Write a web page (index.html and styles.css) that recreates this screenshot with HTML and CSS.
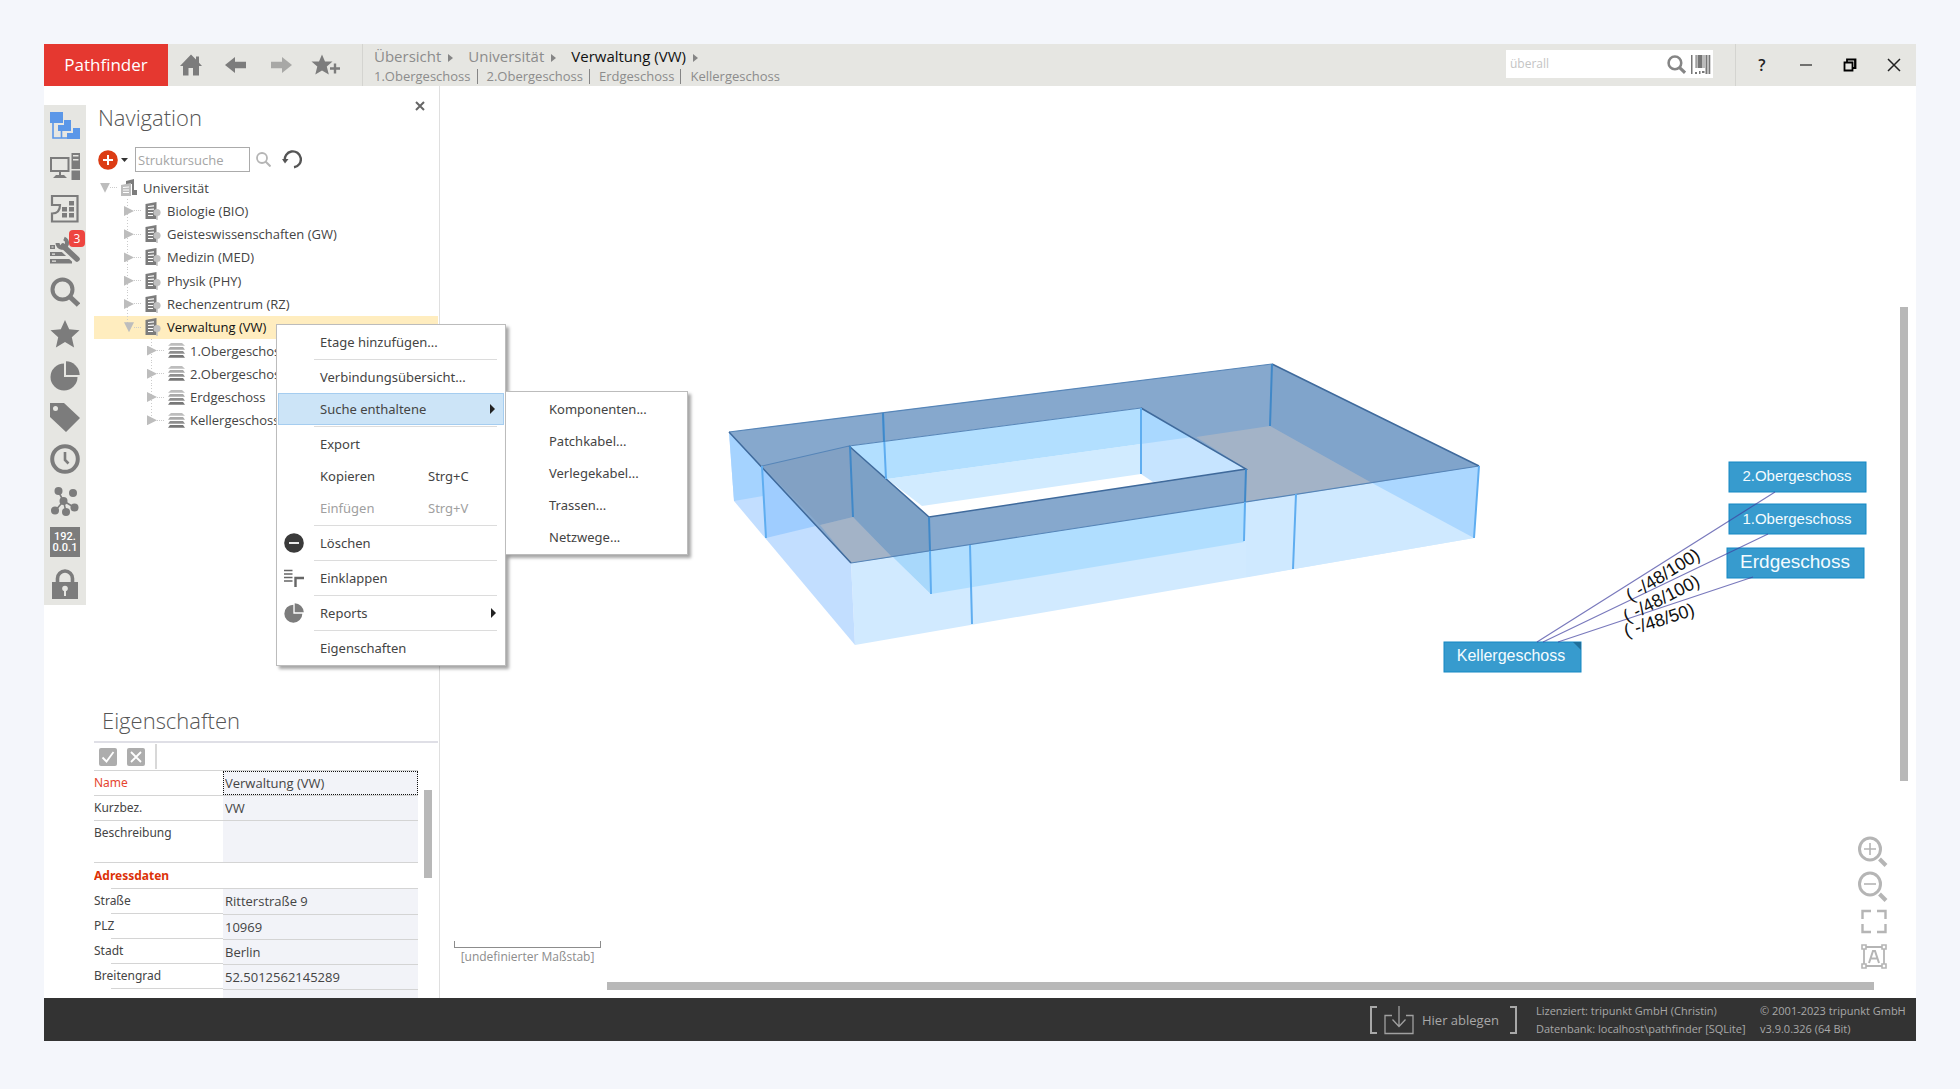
FILE: index.html
```html
<!DOCTYPE html>
<html lang="de">
<head>
<meta charset="utf-8">
<meta name="viewport" content="width=device-width, initial-scale=1">
<title>Pathfinder – Verwaltung (VW)</title>
<link rel="stylesheet" href="styles.css">
</head>
<body>
<svg class="defs" aria-hidden="true">
  <defs>
    <symbol id="i-building" viewBox="0 0 16 18">
      <path fill="#7c7c7c" d="M0 2 11 0v17H0z"/>
      <path stroke="#fff" stroke-width="1.2" d="M2.500 4.500l6-.6M2.500 7.500l6-.3M2.500 10.500h5M2.500 13.500h5"/>
      <circle cx="11.500" cy="10.500" r="3.600" fill="#c0c0c0"/><path stroke="#c0c0c0" stroke-width="1.500" d="M11.500 13v5"/>
    </symbol>
    <symbol id="i-floor" viewBox="0 0 17 15">
      <path fill="#bdbdbd" d="M3 0h11l3 2.800H0z"/><path fill="#a9a9a9" d="M2 4h13l2 2.800H0z"/><path fill="#8f8f8f" d="M2 8h13l2 2.800H0z"/><path fill="#777" d="M2 12h13l2 2.800H0z"/>
    </symbol>
    <symbol id="i-pie" viewBox="0 0 30 30">
      <path d="M14 2.500V16h13.500A13.500 13.500 0 1 1 14 2.500z"/><path d="M16 .3A14 14 0 0 1 29.700 14H16z"/>
    </symbol>
    <symbol id="i-search" viewBox="0 0 30 30">
      <circle cx="12.500" cy="12.500" r="10" fill="none" stroke="currentColor" stroke-width="4"/><path stroke="currentColor" stroke-width="5" d="M19.500 19.500l9 8.500"/>
    </symbol>
    <symbol id="i-star" viewBox="0 0 30 30">
      <path d="M15 1l4.200 9.300 10.300 1-7.700 6.900 2.300 10.200L15 23l-9.100 5.400 2.300-10.200L.5 11.300l10.300-1z"/>
    </symbol>
  </defs>
</svg>

<div class="app">
  <header class="topbar">
    <div class="brand">Pathfinder</div>
    <nav class="quick" aria-label="Schnellzugriff">
      <button type="button" aria-label="Startseite"><svg width="22" height="22" viewBox="0 0 22 22"><path d="M11 .5 0 12h3v9.500h5.500V14h4.500v7.500h6V12h3l-3-3.300V2.500h-3v3z"/></svg></button>
      <button type="button" aria-label="Zurück"><svg width="22" height="16" viewBox="0 0 22 16"><path d="M0 8 10 0v4.800h11v6.400H10V16z"/></svg></button>
      <button type="button" aria-label="Vorwärts" class="faded"><svg width="22" height="16" viewBox="0 0 22 16"><path d="M22 8 12 0v4.800H1v6.400h11V16z"/></svg></button>
      <button type="button" aria-label="Favorit hinzufügen"><svg width="30" height="22" viewBox="0 0 30 22"><path d="M11 .5l3 7h7.500l-5.700 5 2 8L11 16.500 4.300 20.500l2-8L.5 7.500H8z"/><path d="M19 14.500h10M24 9.500v10" stroke="#e6e6e2" stroke-width="5"/><path d="M19 14.500h10M24 9.500v10" stroke="#7c7c7c" stroke-width="2.400"/></svg></button>
    </nav>
    <nav class="crumbs" aria-label="Pfad">
      <div class="trail">
        <a href="#">Übersicht</a><i class="tri"></i>
        <a href="#">Universität</a><i class="tri"></i>
        <a href="#" class="current">Verwaltung (VW)</a><i class="tri"></i>
      </div>
      <div class="children"><a href="#">1.Obergeschoss</a><a href="#">2.Obergeschoss</a><a href="#">Erdgeschoss</a><a href="#">Kellergeschoss</a></div>
    </nav>
    <div class="search">
      <input type="search" placeholder="überall" aria-label="Überall suchen">
      <button type="button" aria-label="Suchen"><svg width="19" height="19"><use href="#i-search"/></svg></button>
      <button type="button" aria-label="Barcode"><svg width="20" height="19" viewBox="0 0 20 19"><path fill="#777" d="M0 0h1.500v19H0zM4.500 0h1.200v13H4.500zM6.500 0h5v13h-5zM12.500 0h1v13h-1zM14.500 0h2v19h-2zM17.500 0h1.800v19h-1.800zM4 17h2v2H4zM8 16h1.500v3H8zM11 16h2.500v2H11z"/></svg></button>
    </div>
    <div class="winctl">
      <button type="button" aria-label="Hilfe" class="help">?</button>
      <button type="button" aria-label="Minimieren"><svg width="14" height="14" viewBox="0 0 14 14"><path d="M1 7h12" stroke="#222" stroke-width="1.200"/></svg></button>
      <button type="button" aria-label="Wiederherstellen"><svg width="14" height="14" viewBox="0 0 14 14"><path d="M1.500 4.500h8v8h-8zM4 4V1.500h8.500V10H10M12 2v8" fill="none" stroke="#000" stroke-width="1.800"/></svg></button>
      <button type="button" aria-label="Schließen"><svg width="14" height="14" viewBox="0 0 14 14"><path d="M1 1l12 12M13 1L1 13" stroke="#222" stroke-width="1.500"/></svg></button>
    </div>
  </header>

  <main class="work">
    <nav class="rail" aria-label="Module">
      <button type="button" aria-label="Navigation" class="on"><svg viewBox="0 0 30 30"><path d="M0 1h13v11H0zM14 9h7v11H8v-6h6zM23 17h7v11H17v-6h6z"/><path d="M3 12v15h14M11.500 19v7.500" fill="none" stroke="#5b97e8" stroke-width="1.600"/></svg></button>
      <button type="button" aria-label="Geräte"><svg viewBox="0 0 30 30"><path fill-rule="evenodd" d="M0 5h19.500v15H11v3h3l3 3H3l3-3h3v-3H0zM2 7v11h15.500V7z"/><path fill-rule="evenodd" d="M21.500 1H30v16h-8.500zM23 3v1.600h5.500V3zm0 4v1.600h5.500V7zM21.500 18.500H30v9.500h-8.500z"/></svg></button>
      <button type="button" aria-label="Grundriss"><svg viewBox="0 0 30 30"><path d="M2 11V2h25.500v25.500H2v-8c5 0 8-3 8-8.500z" fill="none" stroke="#7c7c7c" stroke-width="2.200"/><path d="M12 13h5v4.500h-5zM12 19h5v4.500h-5zM19 7h5v4.500h-5zM19 13h5v4.500h-5zM19 19h5v4.500h-5z"/></svg></button>
      <button type="button" aria-label="Aufträge"><svg viewBox="0 0 30 30"><path d="M0 9h5v4H0zM0 16h15l4 4H0zM0 23h22v4.500H0z"/><path fill="#e6e6e2" d="M2 17.500h3v1.200H2zM2 24.600h4v1.200H2zM1.500 10.500h2v1h-2z"/><path d="M13 12l15 14" stroke="#e6e6e2" stroke-width="7.500"/><path d="M13 10l14 13" stroke="#7c7c7c" stroke-width="5.500" stroke-linecap="round"/><path d="M7.500 7a4.800 4.800 0 1 0 6.500-4.500" fill="none" stroke="#7c7c7c" stroke-width="4"/></svg><span class="badge">3</span></button>
      <button type="button" aria-label="Suche"><svg><use href="#i-search"/></svg></button>
      <button type="button" aria-label="Favoriten"><svg><use href="#i-star"/></svg></button>
      <button type="button" aria-label="Reports"><svg><use href="#i-pie"/></svg></button>
      <button type="button" aria-label="Etiketten"><svg viewBox="0 0 30 30"><path fill-rule="evenodd" d="M0 1h14l16 15-14 14L0 15zM5.500 4a2.500 2.500 0 1 0 0 5 2.500 2.500 0 0 0 0-5z"/></svg></button>
      <button type="button" aria-label="Verlauf"><svg viewBox="0 0 30 30"><circle cx="15" cy="15" r="12.800" fill="none" stroke="#7c7c7c" stroke-width="4"/><path d="M15 8v8l3.500 3.500" fill="none" stroke="#7c7c7c" stroke-width="2.600"/></svg></button>
      <button type="button" aria-label="Netz"><svg viewBox="0 0 30 30"><path d="M8 5l5.500 10L5 25M13.500 15l11 6.500M13.500 15L16 26" fill="none" stroke="#7c7c7c" stroke-width="1.600"/><circle cx="8.500" cy="5" r="4"/><circle cx="23" cy="7" r="4"/><circle cx="13.500" cy="15" r="4"/><circle cx="5" cy="24.500" r="4"/><circle cx="24.500" cy="21.500" r="4"/><circle cx="16" cy="26" r="4"/></svg></button>
      <button type="button" aria-label="IP-Adressen"><span class="ip">192.<br>0.0.1</span></button>
      <button type="button" aria-label="Rechte"><svg viewBox="0 0 30 30"><path d="M7.500 14V9.500a7.500 7.500 0 0 1 15 0V14" fill="none" stroke="#7c7c7c" stroke-width="3.600"/><path d="M2 13h26v17H2z"/><circle cx="15" cy="19.500" r="2.800" fill="#e6e6e2"/><path d="M14 20h2v7h-2z" fill="#e6e6e2"/></svg></button>
    </nav>

    <aside class="side">
      <section class="navpane">
        <div class="titlebar"><h2>Navigation</h2><button type="button" aria-label="Schließen"><svg width="10" height="10" viewBox="0 0 10 10"><path d="M1 1l8 8M9 1L1 9" stroke="#666" stroke-width="2"/></svg></button></div>
        <div class="tools">
          <button type="button" aria-label="Neu"><svg width="20" height="20" viewBox="0 0 20 20"><circle cx="10" cy="10" r="9.800" fill="#dc3c14"/><path d="M5 10h10M10 5v10" stroke="#fff" stroke-width="2"/></svg></button>
          <button type="button" aria-label="Neu Menü" class="caret"><svg width="7" height="4" viewBox="0 0 7 4"><path fill="#333" d="M0 0h7L3.500 4z"/></svg></button>
          <input type="search" placeholder="Struktursuche" aria-label="Struktursuche">
          <button type="button" aria-label="Struktur durchsuchen" class="find"><svg width="15" height="15" viewBox="0 0 15 15"><circle cx="6" cy="6" r="5" fill="none" stroke="#b5b5b5" stroke-width="1.800"/><path d="M9.500 9.500l5 5" stroke="#b5b5b5" stroke-width="2"/></svg></button>
          <button type="button" aria-label="Aktualisieren"><svg width="20" height="19" viewBox="0 0 20 19"><path d="M3 11A8 8 0 1 1 12 17.300" fill="none" stroke="#555" stroke-width="2.400"/><path d="M0 9h6.500L3 13.500z" fill="#555"/></svg></button>
        </div>
        <ul class="tree">
          <li class="l0 open"><i class="arrow"></i><i class="dots"></i><svg width="17" height="18" viewBox="0 0 17 18"><path fill="#7c7c7c" d="M5 2l8-2v11h3v5h-5V5H5z"/><path fill="#bdbdbd" d="M0 6l10-2v13H0z"/><path d="M2 8.500l6-.5M2 11h6M2 13.500h6" stroke="#fff"/></svg><span>Universität</span></li>
          <li class="l1"><i class="arrow"></i><i class="dots"></i><svg width="17" height="18"><use href="#i-building"/></svg><span>Biologie (BIO)</span></li>
          <li class="l1"><i class="arrow"></i><i class="dots"></i><svg width="17" height="18"><use href="#i-building"/></svg><span>Geisteswissenschaften (GW)</span></li>
          <li class="l1"><i class="arrow"></i><i class="dots"></i><svg width="17" height="18"><use href="#i-building"/></svg><span>Medizin (MED)</span></li>
          <li class="l1"><i class="arrow"></i><i class="dots"></i><svg width="17" height="18"><use href="#i-building"/></svg><span>Physik (PHY)</span></li>
          <li class="l1"><i class="arrow"></i><i class="dots"></i><svg width="17" height="18"><use href="#i-building"/></svg><span>Rechenzentrum (RZ)</span></li>
          <li class="l1 open last selected"><i class="arrow"></i><i class="dots"></i><svg width="17" height="18"><use href="#i-building"/></svg><span>Verwaltung (VW)</span></li>
          <li class="l2"><i class="arrow"></i><i class="dots"></i><svg width="17" height="15"><use href="#i-floor"/></svg><span>1.Obergeschoss</span></li>
          <li class="l2"><i class="arrow"></i><i class="dots"></i><svg width="17" height="15"><use href="#i-floor"/></svg><span>2.Obergeschoss</span></li>
          <li class="l2"><i class="arrow"></i><i class="dots"></i><svg width="17" height="15"><use href="#i-floor"/></svg><span>Erdgeschoss</span></li>
          <li class="l2 last"><i class="arrow"></i><i class="dots"></i><svg width="17" height="15"><use href="#i-floor"/></svg><span>Kellergeschoss</span></li>
        </ul>
      </section>

      <section class="props">
        <h2>Eigenschaften</h2>
        <div class="propbar">
          <button type="button" aria-label="Übernehmen"><svg width="18" height="18" viewBox="0 0 18 18"><path d="M3.500 9.500l4 4 7-9.500" fill="none" stroke="#fff" stroke-width="1.800"/></svg></button>
          <button type="button" aria-label="Verwerfen"><svg width="18" height="18" viewBox="0 0 18 18"><path d="M4 4l10 10M14 4L4 14" stroke="#fff" stroke-width="1.800"/></svg></button>
        </div>
        <div class="propbody">
          <table>
            <tr class="req"><th><label for="p1">Name</label></th><td><input id="p1" class="focus" value="Verwaltung (VW)"></td></tr>
            <tr><th><label for="p2">Kurzbez.</label></th><td><input id="p2" value="VW"></td></tr>
            <tr class="tall"><th><label for="p3">Beschreibung</label></th><td><textarea id="p3"></textarea></td></tr>
            <tr class="group"><th colspan="2">Adressdaten</th></tr>
            <tr class="sub"><th><label for="p4">Straße</label></th><td><input id="p4" value="Ritterstraße 9"></td></tr>
            <tr class="sub"><th><label for="p5">PLZ</label></th><td><input id="p5" value="10969"></td></tr>
            <tr class="sub"><th><label for="p6">Stadt</label></th><td><input id="p6" value="Berlin"></td></tr>
            <tr class="sub"><th><label for="p7">Breitengrad</label></th><td><input id="p7" value="52.5012562145289"></td></tr>
            <tr class="cut"><th></th><td></td></tr>
          </table>
          <div class="thumb"></div>
        </div>
      </section>
    </aside>

    <section class="canvas" aria-label="Gebäudeansicht">
      <svg class="scene" viewBox="440 86 1476 912">
        <g class="walls">
          <path fill="#d1eaff" d="M851 563 1479 466 1474 538 855 645z"/>
          <path fill="#cfe9ff" d="M1246 502 1479 466 1474 538 1246 577z"/>
          <path fill="#c2deff" d="M729 432 851 563 855 645 734 501z"/>
          <path fill="#a5d3ff" d="M729 432 762 466 763 496 734 501z"/>
          <path fill="#9fcdff" d="M762 466 820 525 766 538z"/>
          <path fill="#b0deff" d="M892 556 1246 502 1244 542 931 594z"/>
          <path fill="#a8d8fb" d="M892 556 930 551 931 594z"/>
          <path fill="#abd7ff" d="M1372 483 1479 466 1474 538z"/>
        </g>
        <path fill="#86a8cd" d="M729 432 1272 364 1479 466 851 563z"/>
        <path fill="#82a1c4" d="M762 466 849 446 853 517 820 525z"/>
        <path fill="#7da1c6" d="M849 446 929 517 930 551 892 557 853 517z"/>
        <path fill="#80a4cb" d="M1272 364 1479 466 1372 483 1270 426z"/>
        <path fill="#a3b3c7" d="M820 525 853 517 892 557 851 563z"/>
        <path fill="#a3b3c7" d="M1270 426 1196 437 1246 469 1246 502 1372 483z"/>
        <path fill="#fff" d="M849 446 1141 408 1246 469 929 517z"/>
        <path fill="#d1ebff" d="M887 479 1141 444 1141 474 922 506z"/>
        <path fill="#b2dfff" d="M849 446 1141 408 1141 444 887 479z"/>
        <path fill="#c6e4ff" d="M1141 408 1246 469 1153 482 1141 474z"/>
        <path fill="#a9d8ff" d="M1141 408 1192 437 1141 444z"/>
        <g fill="none" stroke="#5685b8" stroke-width="1.200">
          <path d="M729 432 1272 364M762 466 849 446 1141 408M851 563 1479 466"/>
          <path d="M729 432 851 563M849 446 929 517 1246 469 1141 408M1272 364 1479 466" stroke="#3f6a9c" stroke-width="1.500"/>
        </g>
        <g fill="none" stroke="#5fadf0" stroke-width="2">
          <path d="M762 466 766 538M970 545 972 624M1296 494 1293 569M1479 466 1474 538M1141 408 1141 474M883 413 886 479M930 551 931 594M1245 502 1244 541"/>
          <path stroke="#4088c8" d="M883 413 884 442M850 446 853 517M929 517 930 551M1246 469 1245 502M1272 364 1270 426"/>
        </g>
        <g class="nodes">
          <rect x="1729" y="462" width="137" height="30"/><text class="n15" x="1797" y="481">2.Obergeschoss</text>
          <rect x="1729" y="504" width="137" height="30"/><text class="n15" x="1797" y="524">1.Obergeschoss</text>
          <rect x="1727" y="548" width="137" height="30"/><text class="n19" x="1795" y="568">Erdgeschoss</text>
          <rect x="1444" y="642" width="137" height="30"/><path fill="#1f6f9b" d="M1573 642h8v8z"/><text class="n16" x="1511" y="661">Kellergeschoss</text>
        </g>
        <path fill="none" stroke="#4040a0" stroke-opacity=".7" stroke-width="1.200" d="M1537 642 1775 492M1543 642 1768 534M1558 642 1753 577"/>
        <g class="links">
          <text transform="translate(1666 580) rotate(-32)">( -/48/100)</text>
          <text transform="translate(1664 604) rotate(-27)">( -/48/100)</text>
          <text transform="translate(1661 626) rotate(-18)">( -/48/50)</text>
        </g>
      </svg>
      <div class="scale"><div class="ruler"></div>[undefinierter Maßstab]</div>
      <div class="zoomtools">
        <button type="button" aria-label="Vergrößern"><svg width="30" height="34" viewBox="0 0 30 34"><ellipse cx="12" cy="13" rx="10.500" ry="11" fill="none" stroke="#b5b5b5" stroke-width="3"/><path d="M6 13h12M12 7v12" stroke="#b5b5b5" stroke-width="1.600"/><path d="M21.500 23l6.500 6.500" stroke="#b5b5b5" stroke-width="4"/></svg></button>
        <button type="button" aria-label="Verkleinern"><svg width="30" height="34" viewBox="0 0 30 34"><ellipse cx="12" cy="13" rx="10.500" ry="11" fill="none" stroke="#b5b5b5" stroke-width="3"/><path d="M6 13h12" stroke="#b5b5b5" stroke-width="1.600"/><path d="M21.500 23l6.500 6.500" stroke="#b5b5b5" stroke-width="4"/></svg></button>
        <button type="button" aria-label="Einpassen"><svg width="30" height="34" viewBox="0 0 30 34"><path d="M4.500 13V5h8.500M19 5h8.500v8M27.500 18v8H19M13 26H4.500v-8" fill="none" stroke="#b5b5b5" stroke-width="2.400"/></svg></button>
        <button type="button" aria-label="Beschriftung"><svg width="30" height="34" viewBox="0 0 30 34"><path d="M6 6h20v19H6z" fill="none" stroke="#b5b5b5" stroke-width="1.800"/><g fill="#fff" stroke="#b5b5b5" stroke-width="1.600"><path d="M4 4h4v4H4zM24 4h4v4h-4zM4 23h4v4H4zM24 23h4v4h-4z"/></g><path d="M11 22l4-12h2l4 12M12.500 17.500h7" fill="none" stroke="#b5b5b5" stroke-width="2"/></svg></button>
      </div>
      <div class="vbar"></div>
      <div class="hbar"></div>
    </section>

    <div class="menu main-menu" role="menu">
      <button type="button" role="menuitem"><span>Etage hinzufügen...</span></button>
      <hr>
      <button type="button" role="menuitem"><span>Verbindungsübersicht...</span></button>
      <button type="button" role="menuitem" class="hot"><span>Suche enthaltene</span><i class="more"></i></button>
      <hr>
      <button type="button" role="menuitem"><span>Export</span></button>
      <button type="button" role="menuitem"><span>Kopieren</span><kbd>Strg+C</kbd></button>
      <button type="button" role="menuitem" disabled><span>Einfügen</span><kbd>Strg+V</kbd></button>
      <hr>
      <button type="button" role="menuitem"><svg width="20" height="20" viewBox="0 0 20 20"><circle cx="10" cy="10" r="9.800" fill="#3a3a3a"/><path d="M5 10h10" stroke="#fff" stroke-width="1.800"/></svg><span>Löschen</span></button>
      <hr>
      <button type="button" role="menuitem"><svg width="20" height="20" viewBox="0 0 20 20"><path d="M0 2.500h8.500M0 6h8.500M0 9.500h8.500M0 13h8.500" stroke="#666" stroke-width="1.300"/><path d="M11.500 19v-9h8.500" fill="none" stroke="#666" stroke-width="2.400"/></svg><span>Einklappen</span></button>
      <hr>
      <button type="button" role="menuitem"><svg width="20" height="20" fill="#7c7c7c"><use href="#i-pie"/></svg><span>Reports</span><i class="more"></i></button>
      <hr>
      <button type="button" role="menuitem"><span>Eigenschaften</span></button>
    </div>
    <div class="menu sub-menu" role="menu">
      <button type="button" role="menuitem"><span>Komponenten...</span></button>
      <button type="button" role="menuitem"><span>Patchkabel...</span></button>
      <button type="button" role="menuitem"><span>Verlegekabel...</span></button>
      <button type="button" role="menuitem"><span>Trassen...</span></button>
      <button type="button" role="menuitem"><span>Netzwege...</span></button>
    </div>
  </main>

  <footer class="status">
    <div class="drop"><svg width="30" height="30" viewBox="0 0 30 30"><path d="M8 10.500H1v18h28v-18h-7M15 1v20M8.500 14.500l6.500 7 6.500-7" fill="none" stroke="#a0a0a0" stroke-width="1.300"/></svg><span>Hier ablegen</span></div>
    <div class="info license"><span>Lizenziert: tripunkt GmbH (Christin)</span><span>Datenbank: localhost\pathfinder [SQLite]</span></div>
    <div class="info version"><span>© 2001-2023 tripunkt GmbH</span><span>v3.9.0.326 (64 Bit)</span></div>
  </footer>
</div>
</body>
</html>
```
FILE: styles.css
```css
* { box-sizing: border-box; }
body {
  margin: 0;
  padding: 44px 44px 48px;
  background: #f4f6fb;
  color: #444;
  font: 13px/18px "Open Sans", "Noto Sans", sans-serif;
}
button { padding: 0; border: 0; background: none; color: inherit; font: inherit; display: flex; align-items: center; justify-content: center; }
input, textarea { font: inherit; color: inherit; border: 0; padding: 0; margin: 0; min-width: 0; border-radius: 0; outline: 0; }
a { color: inherit; text-decoration: none; }
h2 { margin: 0; font-size: 22px; line-height: 28px; font-weight: 300; color: #555; }
svg { flex: none; }
.defs { position: absolute; width: 0; height: 0; }

.app { display: flex; flex-direction: column; min-height: calc(100vh - 92px); background: #fff; }

/* top bar */
.topbar { display: flex; height: 42px; background: #e6e6e2; }
.brand { width: 124px; background: #e53830; color: #fff; font-size: 17px; line-height: 42px; text-align: center; }
.quick { display: flex; padding-right: 14px; border-right: 1px solid #d4d4d0; fill: #7c7c7c; }
.quick button { width: 45px; }
.quick .faded { fill: #a8a8a6; }
.crumbs { display: flex; flex-direction: column; padding: 3px 0 0 11px; color: #8c8c8c; flex: 1; }
.trail { display: flex; align-items: center; font-size: 15px; line-height: 19px; }
.trail .current { color: #111; }
.tri { border: 4px solid transparent; border-left: 5px solid #858585; border-right: 0; margin: 2px 15px 0 7px; }
.children { display: flex; align-items: center; line-height: 15px; margin-top: 3px; }
.children a + a { border-left: 1px solid #858585; margin-left: 6px; padding-left: 9px; }
.search { display: flex; align-items: center; gap: 5px; width: 207px; height: 28px; margin: 6px 22px 0 0; padding: 0 2px 0 4px; background: #fff; color: #858585; }
.search input { flex: 1; font-size: 12px; background: none; }
.search input::placeholder { color: #c4c4c4; }
.winctl { display: flex; border-left: 1px solid #d4d4d0; padding-left: 4px; color: #222; }
.winctl button { width: 44px; }
.help { font-size: 16px; font-weight: 600; }

/* work area */
.work { display: flex; flex: 1; position: relative; }
.rail { display: grid; grid-auto-rows: 1fr; width: 42px; height: 500px; margin-top: 19px; background: #e6e6e2; fill: #7c7c7c; color: #7c7c7c; }
.rail button { position: relative; }
.rail svg { width: 30px; height: 30px; }
.rail .on { fill: #5b97e8; }
.badge { position: absolute; right: 1px; top: 0; width: 16px; height: 17px; border-radius: 4px; background: #ee4540; color: #fff; font-size: 12px; line-height: 17px; }
.ip { width: 30px; height: 30px; padding-top: 4px; background: #7c7c7c; color: #fff; font: 500 11px/11px Roboto, "Liberation Sans", sans-serif; }

.side { display: flex; flex-direction: column; width: 354px; padding-left: 8px; border-right: 1px solid #dfdfdf; }
.titlebar { display: flex; justify-content: space-between; align-items: flex-start; padding: 17px 14px 0 4px; height: 61px; }
.titlebar button { margin-top: -2px; }
.tools { display: flex; align-items: center; height: 25px; padding-left: 4px; }
.tools .caret { margin: 0 7px 0 3px; }
.tools input { width: 115px; height: 25px; border: 1px solid #ababab; padding: 0 2px; }
.tools input::placeholder { color: #a5a5a5; }
.tools .find { margin: 0 11px 0 6px; }

.tree { display: grid; grid-auto-rows: 1fr; height: 256px; margin: 4px 1px 0 0; padding: 0; list-style: none; color: #444; }
.tree li { display: flex; align-items: center; white-space: nowrap; background-image: repeating-linear-gradient(#ccc 0 1px, transparent 1px 3px); background-size: 1px 100%; background-repeat: no-repeat; background-position: -9px 0; }
.tree .l0 { padding-left: 6px; }
.tree .l1 { padding-left: 30px; background-position: 33px 0; }
.tree .l2 { padding-left: 53px; background-position: 57px 0; }
.tree .last { background-size: 1px 50%; }
.tree .selected { background-color: #ffedbf; color: #111; }
.arrow { width: 10px; height: 10px; background: #bdbdbd; clip-path: polygon(0 0, 100% 50%, 0 100%); }
.open .arrow { clip-path: polygon(0 0, 100% 0, 50% 100%); }
.dots { width: 7px; height: 1px; margin-right: 4px; background: repeating-linear-gradient(90deg, #ccc 0 1px, transparent 1px 2px); }
.tree span { margin-left: 5px; }

/* properties */
.props { margin-top: auto; }
.props h2 { padding: 0 8px; height: 35px; }
.propbar { display: flex; align-items: center; gap: 10px; height: 29px; padding-left: 5px; border-top: 2px solid #dfdfe6; margin-right: 1px; }
.propbar button { width: 18px; height: 18px; border-radius: 2px; background: #adadad; }
.propbar::after { content: ""; width: 2px; height: 25px; background: #d8d8d8; }
.propbody { display: flex; height: 228px; overflow: hidden; }
table { width: 324px; border-collapse: collapse; table-layout: fixed; border-top: 1px solid #d4d4d4; }
tr { height: 25px; }
th { width: 129px; padding: 0; text-align: left; vertical-align: top; font: 12px/23px "Noto Sans", "Open Sans", sans-serif; border-bottom: 1px solid #d4d4d4; }
td { padding: 0; background: #f2f3f8; border-bottom: 1px solid #d4d4d4; vertical-align: top; }
td input, td textarea { display: block; width: 100%; height: 24px; padding: 0 2px; background: none; resize: none; }
td textarea { height: 41px; }
.focus { border: 1px dotted #111; padding: 0 1px; }
.req th { color: #e5452f; }
.group th { width: auto; font-weight: 700; color: #dc3208; line-height: 26px; }
.sub th, .group th { border-bottom: 0; background: linear-gradient(#d4d4d4, #d4d4d4) 17px 100% / 100% 1px no-repeat; }
.thumb { width: 8px; height: 88px; margin: 20px 0 0 6px; background: #b8b8b8; }

/* canvas */
.canvas { position: relative; flex: 1; min-width: 0; }
.scene { position: absolute; inset: 0; width: 100%; height: 100%; }
.nodes rect { fill: #379bce; stroke: #1488c4; }
.nodes text { fill: #f4fbff; text-anchor: middle; font-family: "Liberation Sans", sans-serif; }
.nodes .n15 { font-size: 15px; }
.nodes .n16 { font-size: 16px; }
.nodes .n19 { font-size: 19px; }
.links text { fill: #111; text-anchor: middle; font: 18px "Liberation Sans", sans-serif; }
.scale { position: absolute; left: 14px; bottom: 32px; width: 147px; text-align: center; font-size: 12px; color: #8c8c8c; }
.ruler { height: 7px; border: solid #8c8c8c; border-width: 0 1px 1px; }
.zoomtools { position: absolute; right: 28px; bottom: 23px; display: flex; flex-direction: column; gap: 1px; }
.vbar { position: absolute; right: 8px; top: 221px; bottom: 217px; width: 8px; background: #b8b8b8; }
.hbar { position: absolute; left: 167px; right: 42px; bottom: 8px; height: 8px; background: #b8b8b8; }

/* context menus */
.menu { position: absolute; padding: 1px; background: #fff; border: 1px solid #bcbcbc; box-shadow: 3px 3px 3px rgba(0, 0, 0, .35); color: #444; font-family: "Noto Sans", "Open Sans", sans-serif; }
.menu button { position: relative; justify-content: flex-start; width: 100%; height: 32px; padding: 0 0 1px 42px; }
.menu button svg { position: absolute; left: 6px; }
.menu hr { height: 1px; margin: 1px 7px 1px 36px; border: 0; background: #dcdcdc; }
.menu .hot { border: 1px solid #a5cdf0; background: #cce4f7; padding-left: 41px; }
.menu button:disabled { color: #a0a0a0; }
.menu kbd { position: absolute; left: 150px; font: inherit; }
.more { position: absolute; right: 8px; border: 5px solid transparent; border-left-color: #222; border-right: 0; }
.main-menu { left: 232px; top: 238px; width: 230px; }
.sub-menu { left: 461px; top: 305px; width: 183px; }

/* status bar */
.status { display: flex; justify-content: flex-end; height: 43px; padding-right: 16px; background: #333; color: #a8a8a8; }
.drop { display: flex; align-items: center; gap: 8px; width: 147px; height: 28px; margin: 8px 19px 0 0; padding-left: 12px; background: linear-gradient(#a8a8a8, #a8a8a8) 0 0 / 5px 2px no-repeat, linear-gradient(#a8a8a8, #a8a8a8) 0 100% / 5px 2px no-repeat, linear-gradient(#a8a8a8, #a8a8a8) 100% 0 / 5px 2px no-repeat, linear-gradient(#a8a8a8, #a8a8a8) 100% 100% / 5px 2px no-repeat; border: solid #a8a8a8; border-width: 0 2px; }
.info { display: flex; flex-direction: column; padding-top: 4px; font-size: 11px; white-space: nowrap; }
.license { width: 224px; }
.version { width: 140px; }
```
